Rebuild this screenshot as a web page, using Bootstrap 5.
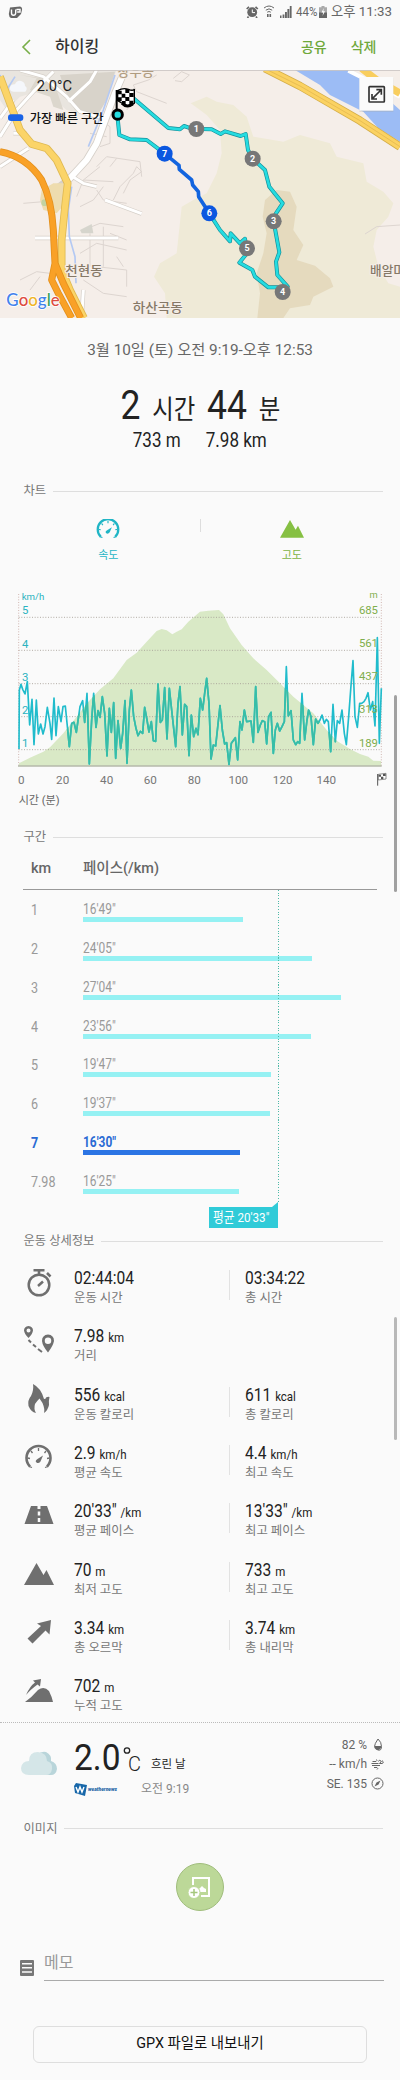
<!DOCTYPE html>
<html lang="ko">
<head>
    <meta charset="UTF-8">
    <meta name="viewport" content="width=device-width, initial-scale=1.0">
    <title>하이킹</title>
    <link href="https://cdn.jsdelivr.net/npm/bootstrap@5.3.0/dist/css/bootstrap.min.css" rel="stylesheet">
    <style>
        body {
            background-color: #fafafa;
            font-family: Roboto, "Noto Sans CJK KR", sans-serif;
            color: #222;
            line-height: 1;
            overflow-x: hidden;
        }
        svg { display: block; flex-shrink: 0; }
        .screen { width: 400px; height: 2080px; overflow: hidden; }
        /* narrow digits */
        .squeeze { display: inline-block; white-space: nowrap; transform: scaleX(.865); transform-origin: left center; }
        .status-bar { height: 24px; padding: 0 8px; font-size: 13.3px; color: #666; }
        .status-bar .battery { margin: 0 -2px 0 4px; }
        .app-bar { height: 46px; padding: 0 23.5px 0 21px; }
        .app-bar .title { font-size: 16px; font-weight: 500; margin-left: 24px; color: #333; }
        .app-bar .action { font-size: 14px; font-weight: 500; color: #6fa83a; margin-left: 24px; }
        .date-line { height: 65px; font-size: 15.3px; color: #666; }
        .duration { height: 44px; font-size: 41px; line-height: 44px; word-spacing: 3.5px; }
        .duration .unit { font-size: 27px; }
        .duration .squeeze, .totals .squeeze { transform-origin: center; }
        .totals { height: 28px; font-size: 19.7px; gap: 17px; }
        .section-head { height: 24px; padding: 0 17px 0 23.5px; font-size: 12.3px; color: #777; gap: 7px; }
        .section-head .rule { height: 1px; background: #dedede; }
        .chart-tabs { height: 87px; font-size: 11px; padding: 0 17px; }
        .chart-tabs .tab-speed { color: #1fb5c5; }
        .chart-tabs .tab-alt { color: #7db343; }
        .tab-sep { width: 1px; height: 13px; background: #ddd; }
        .pace-title { margin-top: 10px; }
        .pace-head { height: 41px; margin: 0 23px; border-bottom: 1px solid #999; font-size: 14.5px; font-weight: 500; color: #666; }
        .pace-head .col-km, .pace-row .col-km { width: 60px; padding-left: 8px; }
        .pace-list { padding: 0 23px; height: 315px; color: #999; }
        .pace-row { height: 38.87px; }
        .pace-row .col-km { font-size: 14.5px; padding-top: 14px; }
        .pace-row .val { font-size: 13.8px; margin-top: 11px; height: 16px; line-height: 16px; }
        .pace-row .bar { height: 5px; background: #95f1f3; }
        .pace-row.best { color: #2a6bd4; font-weight: 700; }
        .pace-row.best .bar { background: #2b74e4; }
        .avg-line { left: 278px; top: 0; width: 1px; height: 312px; background: repeating-linear-gradient(#4fb9a8 0 1px, transparent 1px 2.7px); }
        .avg-tag { left: 209px; top: 317px; width: 69px; height: 21px; background: #30cbd8; color: #fff; font-size: 13.5px; }
        .avg-tag::after { content: ""; position: absolute; right: 0; top: -5px; border-right: 6px solid #30cbd8; border-top: 5px solid transparent; }
        .detail-title { margin-top: 24px; }
        .detail-row { height: 58.35px; }
        .detail-row .ico { width: 74px; height: 58px; color: #6f6f6f; padding-left: 4px; }
        .detail-row .cell { width: 155px; padding-top: 15px; }
        .detail-row .cell + .cell { padding-left: 16px; }
        .detail-row .cell + .cell::before { content: ""; float: left; width: 1px; height: 30px; background: #e2e2e2; margin: 2px 0 0 -16px; }
        .detail-row .num { font-size: 18px; line-height: 19px; height: 19px; color: #222; }
        .detail-row .num small { font-size: 13.3px; }
        .detail-row .cap { font-size: 12.4px; line-height: 16px; color: #777; margin-top: 3px; }
        .weather { height: 95px; margin-top: 2px; padding: 0 16px 0 20px; border-top: 1px dotted #bbb; }
        .temp-line { height: 37px; }
        .degree { font-size: 36px; line-height: 36px; transform: scaleX(.93); margin-right: -3px; }
        .sky { font-size: 11.5px; margin: 0 0 5px 8px; }
        .weather .sub { font-size: 12px; color: #888; margin-top: 7px; }
        .at-time { margin-left: 24px; }
        .weather .stats { font-size: 12px; color: #666; padding-top: 12px; }
        .weather .stats > div { height: 19.6px; }
        .weathernews { font-size: 5px; font-weight: 900; font-style: italic; color: #2264a5; }
        .photo-wrap { margin-top: 22px; }
        .add-photo { width: 48px; height: 48px; background: #bcd898; border: 1px solid #a0bd7c; }
        .memo { margin: 44px 16px 0 20px; height: 26px; }
        .memo .field { border-bottom: 1px solid #aaa; margin-left: 10px; font-size: 16px; color: #999; height: 26px; }
        .export-wrap { margin-top: 45px; }
        .export-btn { width: 334px; height: 37px; border: 1.5px solid #dedede; border-radius: 6px; font-size: 14.4px; color: #111; padding: 0; background: transparent; }
        .thumb { left: 394px; width: 3px; background: #a0a0a0; border-radius: 2px; }
        .thumb-a { top: 695px; height: 197px; }
        .thumb-b { top: 1317px; height: 123px; background: #b8b8b8; }
    </style>
</head>
<body>
<div class="screen position-relative">

    <div class="status-bar d-flex align-items-center justify-content-between">
        <svg width="15" height="13" viewBox="0 0 15 13"><path d="M2 1.5 12 .5Q14.5 1 14 4L13 8 9 12 3 12Q1 11 .8 8Z" fill="#666"/><path d="M3.5 3.5V7Q3.5 9.3 5.5 9.3T7.7 7V3.5M8.5 3.5H12V6H9.2" fill="none" stroke="#fff" stroke-width="1.4"/></svg>
        <div class="d-flex align-items-center">
            <svg width="13" height="12" viewBox="0 0 13 12"><circle cx="6.2" cy="6.2" r="4.9" fill="#666"/><path d="M.7 3 3 .8M9.5.8 11.8 3M2.5 10.5 1.5 12M10 10.5 11 12" stroke="#666" stroke-width="1.7"/><path d="M6.3 3.5V6.6H9" fill="none" stroke="#fff"/></svg>
            <svg class="ms-1" width="13" height="13" viewBox="0 0 13 13" fill="none" stroke="#666"><path d="M1 3Q6 -1 11 3M2.8 5.2Q6 2.5 9.2 5.2M4.2 7.2Q6 5.8 7.8 7.2"/><path d="M4.8 12V9M7.3 9V12" stroke-width="1.6"/></svg>
            <svg class="ms-1" width="12" height="12" viewBox="0 0 12 12" fill="#666"><path d="M0 9.5h1.5V12H0zM2.6 8.5h1.8V12H2.6zM5 6h1.9v6H5zM7.4 3h1.9v9H7.4zM9.8 0h1.8v12H9.8z"/></svg>
            <span class="squeeze battery">44%</span>
            <svg width="8" height="12" viewBox="0 0 8 12"><path d="M2.5 0h3v1.3H8V12H0V1.3H2.5Z" fill="#aaa"/><path d="M0 6.5H8V12H0z" fill="#666"/><path d="M4.8 2 2.5 6.5H4.2L3.5 10 6 5.3H4.3Z" fill="#fff"/></svg>
            <span class="ms-1">오후 11:33</span>
        </div>
    </div>

    <div class="app-bar d-flex align-items-center">
        <svg width="10" height="16" viewBox="0 0 10 16"><path d="M9 1 2 8l7 7" fill="none" stroke="#78ae48" stroke-width="1.6"/></svg>
        <span class="title">하이킹</span>
        <span class="action ms-auto">공유</span>
        <span class="action">삭제</span>
    </div>

    <!-- map, three units per pixel -->
    <svg width="400" height="248" viewBox="0 210 1200 744" font-family="Roboto, 'Noto Sans CJK KR', sans-serif">
        <rect y="210" width="1200" height="744" fill="#f5eee9"/>
        <path d="M572 310 620 290 650 305 700 315 740 350 760 410 850 425 900 405 990 430 1010 470 1090 490 1100 545 1150 575 1180 610 1165 650 1130 690 1120 740 1135 800 1165 850 1200 860V954H500L495 880 462 830 480 790 530 760 545 620 580 600 620 580 650 520 665 460 660 390 620 345 600 330Z" fill="#efead7"/>
        <path d="M795 600 830 570 870 575 890 620 880 690 910 735 890 780 945 797 990 835 1000 860 940 890 930 915 870 925 850 954H772L780 880 770 820 790 760 800 700 788 650Z" fill="#e5dabe"/>
        <path d="M0 210H350L290 350 200 330 130 270 60 290 20 330 0 300Z" fill="#e9e5df"/>
        <path d="M180 225 345 215 320 300 290 350 225 330 195 270Z" fill="#d8d3ca"/>
        <path d="M60 225 110 235 90 270 150 290 160 320 190 330 160 240Z" fill="#dcd7cd"/>
        <path d="M885 210H1050L1110 250 1200 330V425L1135 385 1090 335 990 285 960 255Z" fill="#9cbcf5"/>
        <path d="M1045 212 1120 250 1200 290" stroke="#fff" stroke-width="12" fill="none"/>
        <g fill="none" stroke="#ddd5d0" stroke-width="3">
            <path d="M470 225 445 240 400 255 410 275 500 310M520 235 545 215 568 225 545 245 525 242M405 300 380 330M300 360 330 380 330 430 300 440M270 400 320 410M290 500 320 470 420 485 425 530M330 500 350 475M250 540 340 545M230 590 250 540 300 500"/>
            <path d="M340 600 360 560 400 520 410 500 425 515 390 540 370 580M240 620 280 600 310 560M290 570 310 600 380 610M250 690 300 670 370 680M240 760 290 730 380 750M260 830 290 800 380 810 380 860M270 700V800M310 680V800M250 840 310 880 380 890M350 770 370 800M330 700 380 720M60 840 110 815 150 820M90 870 120 830M70 610 130 605M1200 675 1130 680 1095 702"/>
        </g>
        <path d="M240 690 275 672 280 700H245Z" fill="#d6d5cd"/>
        <g fill="none" stroke="#d5cfc8" stroke-width="13" stroke-linejoin="round">
            <path d="M60 210 130 230 200 290 240 335 310 355M0 410 50 330 100 275 160 215M205 305 270 245 290 210M0 355 40 300M40 400 80 400M315 600 425 641M105 714H355M210 525 250 550 290 560M0 500 85 445M250 870 245 954"/>
            <path d="M375 210 345 280 290 430 260 480 205 540 140 590" stroke-width="23"/>
        </g>
        <g fill="none" stroke="#fff" stroke-width="9" stroke-linejoin="round">
            <path d="M60 210 130 230 200 290 240 335 310 355M0 410 50 330 100 275 160 215M205 305 270 245 290 210M0 355 40 300M40 400 80 400M315 600 425 641M105 714H355M210 525 250 550 290 560M0 500 85 445M250 870 245 954"/>
            <path d="M375 210 345 280 290 430 260 480 205 540" stroke-width="18"/>
        </g>
        <path d="M345 225 310 330 265 440M215 560 205 630 208 710 225 770 228 850M0 225 20 270 45 230" fill="none" stroke="#b4c9f3" stroke-width="5"/>
        <path d="M125 570 160 550 200 550 205 600 170 640 130 630 120 600Z" fill="#eedcae"/>
        <circle cx="134" cy="608" r="10" fill="#c3d3a1"/>
        <g fill="none" stroke-linejoin="round">
            <path d="M0 230 30 310 60 390 95 432 140 445 170 480 203 550 195 620 185 720 185 810 210 870 252 954" stroke="#dfb953" stroke-width="23"/>
            <path d="M0 230 30 310 60 390 95 432 140 445 170 480 203 550 195 620 185 720 185 810 210 870 252 954" stroke="#fbd468" stroke-width="18"/>
            <path d="M0 455Q80 470 125 540 155 600 160 690L165 790 190 850 242 954M165 790 155 840 175 880 215 954" stroke="#e3901d" stroke-width="21"/>
            <path d="M0 455Q80 470 125 540 155 600 160 690L165 790 190 850 242 954M165 790 155 840 175 880 215 954" stroke="#f9a127" stroke-width="16"/>
            <path d="M795 205 900 258 1080 362 1200 440" stroke="#d5ae49" stroke-width="25"/>
            <path d="M795 205 900 258 1080 362 1200 440" stroke="#fbd262" stroke-width="20"/>
            <path d="M797 207 900 258 1080 362 1200 440" stroke="#dfb34c" stroke-width="2"/>
            <path d="M1085 205 1130 240 1200 280" stroke="#f9ce5e" stroke-width="22"/>
        </g>

        <g fill="none" stroke-linejoin="round" stroke-linecap="round">
            <path d="M395 290 505 384 540 388 552 378 575 386 635 388 662 402 675 394 722 408 737 402 744 450 758 476 795 510 808 560 820 575 848 610 828 640 821 664 838 757 828 785 832 825 863 860 848 876 840 862 805 862 765 830 757 810 718 788 741 760 735 716 720 730 692 700 690 724 660 690 628 640M494 461 440 420 390 418 358 405 352 345" stroke="#158f9a" stroke-width="12"/>
            <path d="M395 290 505 384 540 388 552 378 575 386 635 388 662 402 675 394 722 408 737 402 744 450 758 476 795 510 808 560 820 575 848 610 828 640 821 664 838 757 828 785 832 825 863 860 848 876 840 862 805 862 765 830 757 810 718 788 741 760 735 716 720 730 692 700 690 724 660 690 628 640M494 461 440 420 390 418 358 405 352 345" stroke="#25dce0" stroke-width="8"/>
            <path d="M628 640 596 590 595 575 578 555 575 540 538 508 537 496 494 461" stroke="#1264df" stroke-width="11"/>
        </g>
        <g font-size="27" font-weight="700" fill="#fff" text-anchor="middle">
            <circle cx="589" cy="387" r="24" fill="#777"/><text x="589" y="396">1</text>
            <circle cx="758" cy="476" r="24" fill="#777"/><text x="758" y="485">2</text>
            <circle cx="821" cy="664" r="24" fill="#777"/><text x="821" y="673">3</text>
            <circle cx="848" cy="876" r="24" fill="#777"/><text x="848" y="885">4</text>
            <circle cx="741" cy="745" r="24" fill="#777"/><text x="741" y="754">5</text>
            <circle cx="628" cy="640" r="24" fill="#0b57e0"/><text x="628" y="649">6</text>
            <circle cx="494" cy="461" r="24" fill="#0b57e0"/><text x="494" y="470">7</text>
        </g>
        <!-- finish flag and current position -->
        <path d="M350 270V335" stroke="#000" stroke-width="6"/>
        <path d="M353 272Q370 262 385 268T403 267V310Q390 322 375 315L353 302Z" fill="#fff" stroke="#000" stroke-width="4"/>
        <path d="M354 272h11v11h-11zM376 267h12v12h-12zM365 281h11v12h-11zM388 279h13v12h-13zM354 292h11v12h-11zM376 291h12v12h-12zM366 303h11v11h-11zM388 302h12v12h-12z"/>
        <path d="M366 310Q380 325 398 312" fill="none" stroke="#000" stroke-width="9"/>
        <circle cx="353" cy="344" r="14" fill="#25dce0" stroke="#000" stroke-width="9"/>

        <g font-weight="500" fill="#857867" stroke="#f5eee9" stroke-width="6" paint-order="stroke" stroke-linejoin="round" font-size="38">
            <text x="352" y="228" fill="#b09c80" textLength="110" lengthAdjust="spacingAndGlyphs">창우동</text>
            <text x="196" y="824" textLength="112" lengthAdjust="spacingAndGlyphs">천현동</text>
            <text x="398" y="935" textLength="150" lengthAdjust="spacingAndGlyphs">하산곡동</text>
            <text x="1110" y="826">배알미동</text>
        </g>
        <path d="M40 275Q28 275 30 262 33 252 45 253 50 240 63 243 75 246 75 258 85 264 76 275Z" fill="#f5f7fb"/>
        <text x="110" y="272" font-size="44" fill="#222" textLength="106" lengthAdjust="spacingAndGlyphs">2.0°C</text>
        <rect x="24" y="343" width="46" height="20" rx="9" fill="#1a63e6"/>
        <text x="89" y="368" font-size="37" font-weight="500" fill="#111" textLength="222" lengthAdjust="spacingAndGlyphs">가장 빠른 구간</text>
        <text x="19" y="919" font-size="54" font-family="Lato, sans-serif" font-weight="500" stroke="#fff" stroke-width="5" paint-order="stroke" textLength="160" lengthAdjust="spacingAndGlyphs"><tspan fill="#4382ec">G</tspan><tspan fill="#dd4b3e">o</tspan><tspan fill="#efb527">o</tspan><tspan fill="#4382ec">g</tspan><tspan fill="#36a058">l</tspan><tspan fill="#dd4b3e">e</tspan></text>

        <rect x="1078" y="233" width="102" height="102" fill="#a8a49c" opacity=".4"/>
        <rect x="1078" y="231" width="102" height="101" fill="#fbfbfb"/>
        <g fill="none" stroke="#333" stroke-width="5">
            <rect x="1107" y="260" width="46" height="46" rx="2"/>
            <path d="M1117 296 1143 270M1129 269H1144V284M1116 282V297H1131"/>
        </g>
        <path d="M0 211H1200" stroke="#c9c5c2" stroke-width="3"/>
    </svg>

    <div class="date-line d-flex align-items-center justify-content-center">3월 10일 (토) 오전 9:19-오후 12:53</div>
    <div class="duration text-center"><span class="squeeze">2 <span class="unit">시간</span> 44 <span class="unit">분</span></span></div>
    <div class="totals d-flex justify-content-center align-items-center"><span class="squeeze">733 m</span><span class="squeeze">7.98 km</span></div>

    <div class="section-head d-flex align-items-center mt-4"><span>차트</span><div class="rule flex-grow-1"></div></div>

    <div class="chart-tabs d-flex">
        <div class="tab-speed w-50 d-flex flex-column align-items-center pt-3">
            <svg width="24" height="19" viewBox="0 0 28 22"><use href="#i-gauge"/></svg>
            <span class="mt-2 pt-1">속도</span>
        </div>
        <div class="tab-sep mt-3"></div>
        <div class="tab-alt w-50 d-flex flex-column align-items-center pt-3">
            <svg width="24" height="19" viewBox="0 0 30 23"><use href="#i-peak" fill="#86c043"/></svg>
            <span class="mt-2 pt-1">고도</span>
        </div>
    </div>

    <svg width="400" height="225" viewBox="0 60 1200 675" font-family="Roboto, 'Noto Sans CJK KR', sans-serif">
        <clipPath id="hill"><path d="M57 580 90 563 130 545 150 532 190 490 230 440 265 395 300 358 340 325 380 270 410 248 440 215 470 183 485 177 500 181 517 193 530 185 545 178 565 155 600 125 625 122 657 120 670 133 690 175 725 225 760 265 800 300 840 340 880 380 910 405 940 430 980 480 1010 512 1050 537 1080 552 1105 560 1120 572 1144 573V588H57Z"/></clipPath>
        <rect x="57" y="60" width="1087" height="528" fill="#d9e9c6" clip-path="url(#hill)"/>
        <g stroke="#a49c94" stroke-width="2.5" stroke-dasharray="3 5">
            <path d="M56 142H1144M56 241H1144M56 341H1144M56 440H1144M56 539H1144"/>
            <path d="M56 72V588M1144 72V588" stroke="#c9a9a4"/>
        </g>
        <path d="M54 588H1145" stroke="#b5b9aa" stroke-width="4"/>
        <g fill="#2bb3c0" font-size="34">
            <text x="65" y="91" font-size="29">km/h</text>
            <text x="66" y="133">5</text><text x="66" y="233">4</text><text x="66" y="332">3</text><text x="66" y="431">2</text><text x="66" y="530">1</text>
        </g>
        <g id="speed" fill="none" stroke-width="5" stroke-linejoin="round"></g>
        <g fill="#7fae4c" font-size="34" text-anchor="end">
            <text x="1133" y="84" font-size="28">m</text>
            <text x="1134" y="133">685</text><text x="1134" y="232">561</text><text x="1134" y="331">437</text><text x="1134" y="430">313</text><text x="1134" y="530">189</text>
        </g>
        <g fill="#777" font-size="35" text-anchor="middle">
            <text x="64" y="641">0</text><text x="188" y="641">20</text><text x="320" y="641">40</text><text x="451" y="641">60</text><text x="583" y="641">80</text><text x="715" y="641">100</text><text x="848" y="641">120</text><text x="979" y="641">140</text>
        </g>
        <path d="M1133 612V647" stroke="#555" stroke-width="3"/>
        <path d="M1135 613 1158 610V627L1135 630Z" fill="#fff" stroke="#555" stroke-width="2"/>
        <path d="M1136 614h7v6h-7zM1149 612h8v6h-8zM1143 620h7v7h-7z" fill="#555"/>
        <text x="56" y="702" font-size="34" fill="#666" textLength="123" lengthAdjust="spacingAndGlyphs">시간 (분)</text>
    </svg>

    <div class="section-head d-flex align-items-center pace-title"><span>구간</span><div class="rule flex-grow-1"></div></div>
    <div class="pace-head d-flex align-items-center"><div class="col-km">km</div><div>페이스(/km)</div></div>
    <div class="position-relative">
        <div class="pace-list" id="pace"></div>
        <div class="avg-line position-absolute"></div>
        <div class="avg-tag position-absolute d-flex align-items-center ps-1"><span class="squeeze">평균 20'33"</span></div>
    </div>

    <div class="section-head d-flex align-items-center detail-title"><span>운동 상세정보</span><div class="rule flex-grow-1"></div></div>
    <div id="details"></div>

    <div class="weather d-flex">
        <svg class="mt-4" width="38" height="32" viewBox="0 0 38 32"><path d="M26 5Q32 8 31 14 37 16 37 22 36 28 31 28H20L17 8Q21 4 26 5Z" fill="#b9d5da"/><path d="M9 28Q1 28 1 21 2 14 9 14 9 5 18 5 27 6 27 14 33 16 32 22 31 28 26 28Z" fill="#d5e6e8"/></svg>
        <div class="ms-3 mt-3">
            <div class="d-flex align-items-end pt-1 temp-line">
                <span class="squeeze degree">2.0</span>
                <svg width="22" height="30" viewBox="0 0 22 30"><circle cx="6" cy="4.5" r="2.7" fill="none" stroke="#222" stroke-width="1.3"/><text x="7" y="25" font-size="20" font-weight="300" font-family="Roboto" fill="#222">C</text></svg>
                <span class="sky">흐린 날</span>
            </div>
            <div class="d-flex align-items-center sub">
                <svg width="14" height="13" viewBox="0 0 14 13"><path d="M2 0 13 2 11 13 1 10 0 3Z" fill="#1767a9"/><path d="M2 4 4 9 6 4 8 9 10 4" fill="none" stroke="#fff" stroke-width="1.4"/></svg>
                <span class="weathernews">weathernews</span>
                <span class="at-time">오전 9:19</span>
            </div>
        </div>
        <div class="stats ms-auto">
            <div class="d-flex align-items-center justify-content-end">82 %<svg class="ms-1" width="13" height="13" viewBox="0 0 13 13" fill="none" stroke="#666"><path d="M7 1Q3.5 6 3.5 8.5T7 12 10.5 8.5 7 1Z"/><path d="M4 8.5H10Q9.5 11.5 7 11.5T4 8.5Z" fill="#666"/></svg></div>
            <div class="d-flex align-items-center justify-content-end">-- km/h<svg class="ms-1" width="13" height="13" viewBox="0 0 13 13" fill="none" stroke="#666"><path d="M1.500 3.500H5Q6.500 2.700 5.500 1.500M.500 5.500H7.500M7.500 3.500Q8 1.500 9.500 2.500T8.500 5.500H11Q13 5 12 3.500T10.500 3.500M1 7.500H9M3 9.500H6Q7.500 10.500 6 11.500"/></svg></div>
            <div class="d-flex align-items-center justify-content-end">SE. 135<svg class="ms-1" width="13" height="13" viewBox="0 0 13 13" fill="none" stroke="#666"><circle cx="6.5" cy="6.5" r="5.5"/><path d="M9.5 3.5 7.5 7.5 3.5 9.5 5.5 5.5Z" fill="#666" stroke="none"/></svg></div>
        </div>
    </div>

    <div class="section-head d-flex align-items-center"><span>이미지</span><div class="rule flex-grow-1"></div></div>
    <div class="d-flex justify-content-center photo-wrap">
        <div class="add-photo rounded-circle d-flex align-items-center justify-content-center">
            <svg width="26" height="26" viewBox="0 0 26 26"><path d="M6 11V4H22V22H14" fill="none" stroke="#fff" stroke-width="2"/><path d="M13 18 12 15 15 12 17 14 19 15V18Z" fill="#fff"/><circle cx="7" cy="18.5" r="6" fill="#fff" stroke="#bcd898"/><path d="M7 15V22M3.5 18.5H10.5" stroke="#a5c77c" stroke-width="1.5"/></svg>
        </div>
    </div>

    <div class="memo d-flex align-items-center">
        <svg width="14" height="16" viewBox="0 0 14 16"><rect width="14" height="16" rx="1" fill="#777"/><path d="M2 3.7H12M2 7.8H12M2 11.9H12" stroke="#fafafa" stroke-width="1.5"/></svg>
        <div class="field flex-grow-1">메모</div>
    </div>
    <div class="text-center export-wrap"><button class="export-btn">GPX 파일로 내보내기</button></div>

    <div class="thumb thumb-a position-absolute"></div>
    <div class="thumb thumb-b position-absolute"></div>
</div>

<svg width="0" height="0" class="position-absolute">
    <defs>
        <g id="i-gauge">
            <path d="M5.5 20.5A12 12 0 1 1 22.5 20.5" fill="none" stroke="currentColor" stroke-width="2.6"/>
            <path d="M14 2V5M3 12 5.500 12.500M25 12 22.500 12.500M6.500 5 8 7M21.500 5 20 7M4.500 20.500 7.500 21.500M23.500 20.500 20.500 21.500" stroke="currentColor" stroke-width="1.3"/>
            <path d="M18.5 9.500 16 15.5Q14 18 12 16.500T13 13Z" fill="currentColor"/>
        </g>
        <path id="i-peak" d="M0 23 12.5 1 19.5 13 22.5 8 30 23Z"/>
    </defs>
</svg>

<script src="https://cdn.jsdelivr.net/npm/bootstrap@5.3.0/dist/js/bootstrap.bundle.min.js"></script>
<script>
    const speed = [57,537,58,360,63,343,68,358,75,372,82,335,89,465,96,388,102,524,109,390,115,492,122,462,129,492,135,470,142,412,150,460,155,508,162,384,168,497,175,410,183,455,189,410,196,408,208,530,215,460,222,457,229,487,240,410,248,392,254,457,261,370,268,582,275,450,281,370,288,472,294,422,300,442,307,380,314,430,321,558,328,415,334,487,341,398,347,565,354,452,362,535,368,490,375,392,381,580,388,420,394,360,401,440,408,475,414,497,421,484,428,490,434,412,441,450,447,486,454,455,460,512,467,514,474,342,481,457,487,450,494,353,501,507,508,355,515,420,527,530,534,400,540,350,547,495,554,403,560,410,567,557,574,435,581,500,588,475,594,494,601,385,608,420,614,370,620,325,627,400,633,567,640,525,647,528,660,407,667,480,674,522,680,518,687,583,694,520,706,503,713,570,720,455,726,480,733,420,740,455,753,453,760,517,767,350,774,487,781,465,787,452,794,455,800,522,806,440,813,427,820,550,826,480,832,460,839,483,846,470,853,455,859,290,865,438,873,422,880,510,887,524,893,515,899,520,906,370,914,510,921,450,926,420,933,440,940,524,947,447,954,460,960,450,966,435,973,460,979,448,985,455,992,545,999,403,1006,515,1012,452,1019,460,1026,420,1033,490,1039,524,1046,440,1052,360,1059,272,1065,440,1072,472,1079,400,1085,400,1092,395,1098,385,1104,368,1111,420,1118,395,1125,468,1132,203,1138,520,1144,355];
    document.getElementById('speed').innerHTML =
        `<polyline stroke="#20bccc" points="${speed}"/><polyline stroke="#38bea6" clip-path="url(#hill)" points="${speed}"/>`;

    // km, pace, bar width in px
    const pace = [
        ['1', `16'49"`, 160], ['2', `24'05"`, 229], ['3', `27'04"`, 257.5], ['4', `23'56"`, 227.5],
        ['5', `19'47"`, 188], ['6', `19'37"`, 186.5], ['7', `16'30"`, 157], ['7.98', `16'25"`, 156]
    ];
    document.getElementById('pace').innerHTML = pace.map(p => `
        <div class="pace-row d-flex ${p[0] === '7' ? 'best' : ''}">
            <div class="col-km"><span class="squeeze">${p[0]}</span></div>
            <div><div class="val"><span class="squeeze">${p[1]}</span></div><div class="bar" style="width: ${p[2]}px"></div></div>
        </div>`).join('');

    const icons = {
        watch: '<circle cx="15" cy="18" r="10.3" fill="none" stroke="currentColor" stroke-width="2.5"/><path d="M9.5 3.3H20.5M15 4V7M23 6 26.5 9.5" stroke="currentColor" stroke-width="2.6"/><path d="M14 19 19 14.5" stroke="currentColor" stroke-width="2.5"/>',
        route: '<path fill-rule="evenodd" d="M4.5 1Q9 1.5 9 5.5 8.5 9 4.5 13 .5 9 0 5.5 0 1.5 4.5 1ZM4.5 3.5A2 2 0 1 0 4.5 7.5 2 2 0 1 0 4.5 3.5ZM24 9.5Q30 10 30 16 29 21 24 27.5 18.5 21 18 16 18 10 24 9.5ZM24 12.5A3.2 3.2 0 1 0 24 19 3.2 3.2 0 1 0 24 12.5Z" fill="currentColor"/><path d="M4.5 15 7 17.5M9 19.5 12 22M14 24 18 27" stroke="currentColor" stroke-width="2"/>',
        fire: '<path d="M9 0Q17 4 20 15 22 15 22 13.500 24 12.500 25.500 13 24.500 17 25 21 24 26 20 29 21 25 18.500 19L15.500 14.500Q13 17 11 20 9.500 25 12 29 7 28 4.500 22 3.500 16 7 12 10 6 9 0Z" fill="currentColor"/>',
        gauge: '<g transform="translate(.5 4)"><use href="#i-gauge"/></g>',
        road: '<path d="M7 6H13.500V9H16.500V6H23L29.500 24H.5Z" fill="currentColor"/><path d="M15 11.500V15.500M15 18V22" stroke="#fafafa" stroke-width="2.500"/>',
        peak: '<g transform="translate(0 3)" fill="currentColor"><use href="#i-peak"/></g>',
        up: '<path d="M13 6.5 27 3 25.5 17.5 21.5 13.5 8.5 26.5 3.5 21.5 17 9Z" fill="currentColor"/>',
        climb: '<path d="M1 27Q8 22 14 15 20 10.5 25 16 28 22 29 27ZM9 5.5 17 4 16 11.5 13.5 9.5Q6 15 2 20 6 11 11 7.5Z" fill="currentColor"/>'
    };
    const details = [
        ['watch', '02:44:04', '', '운동 시간', '03:34:22', '', '총 시간'],
        ['route', '7.98', 'km', '거리'],
        ['fire', '556', 'kcal', '운동 칼로리', '611', 'kcal', '총 칼로리'],
        ['gauge', '2.9', 'km/h', '평균 속도', '4.4', 'km/h', '최고 속도'],
        ['road', `20'33"`, '/km', '평균 페이스', `13'33"`, '/km', '최고 페이스'],
        ['peak', '70', 'm', '최저 고도', '733', 'm', '최고 고도'],
        ['up', '3.34', 'km', '총 오르막', '3.74', 'km', '총 내리막'],
        ['climb', '702', 'm', '누적 고도']
    ];
    function cell(value, unit, caption) {
        return `<div class="cell"><div class="num"><span class="squeeze">${value} <small>${unit}</small></span></div><div class="cap">${caption}</div></div>`;
    }
    document.getElementById('details').innerHTML = details.map(d => `
        <div class="detail-row d-flex">
            <div class="ico d-flex align-items-center justify-content-center"><svg width="30" height="30" viewBox="0 0 30 30">${icons[d[0]]}</svg></div>
            ${cell(d[1], d[2], d[3])}${d[4] ? cell(d[4], d[5], d[6]) : ''}
        </div>`).join('');
</script>
</body>
</html>
